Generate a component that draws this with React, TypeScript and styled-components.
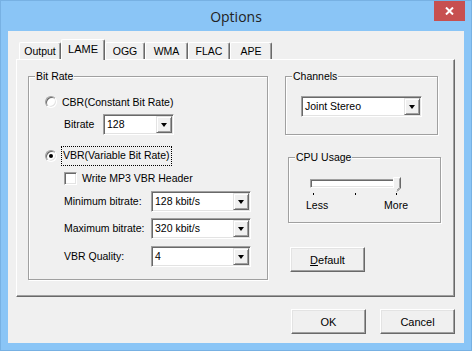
import React from "react";
import styled, { createGlobalStyle } from "styled-components";

const Global = createGlobalStyle`
  html, body { margin: 0; padding: 0; background: #8ac5f6; }
  body {
    font-family: "Liberation Sans", Arial, sans-serif;
    font-size: 10.5px;
    color: #000;
  }
`;

const Win = styled.div`
  width: 472px;
  height: 351px;
  box-sizing: border-box;
  background: #8ac5f6;
  border: 1px solid #77b1e3;
  display: flex;
  flex-direction: column;
`;

const TitleBar = styled.div`
  height: 30px;
  display: grid;
  grid-template-columns: 1fr auto 1fr;
  align-items: center;
`;

const Title = styled.div`
  grid-column: 2;
  font-family: "Open Sans", "Noto Sans", sans-serif;
  font-size: 14px;
  color: #222;
  padding-top: 1px;
`;

const CloseBtn = styled.div`
  grid-column: 3;
  justify-self: end;
  align-self: start;
  width: 31px;
  height: 20px;
  margin-right: 6px;
  background: #c75050;
  display: flex;
  align-items: center;
  justify-content: center;
`;

const Client = styled.div`
  flex: 1;
  margin: 0 7px 7px 7px;
  background: #f0f0f0;
  padding: 8px 9px 0 8px;
  display: flex;
  flex-direction: column;
`;

const TabStrip = styled.div`
  height: 20px;
  display: flex;
  align-items: flex-end;
  padding-left: 3px;
  position: relative;
  z-index: 1;
`;

const Tab = styled.div<{ $w: number; $active?: boolean }>`
  width: ${(p) => p.$w}px;
  height: ${(p) => (p.$active ? 21 : 17)}px;
  margin-bottom: ${(p) => (p.$active ? -1 : 0)}px;
  box-sizing: border-box;
  background: #f0f0f0;
  border-top: 1px solid #fff;
  border-left: 1px solid #fff;
  border-right: 1px solid #696969;
  box-shadow: inset -1px 0 0 #a0a0a0;
  border-radius: 2px 2px 0 0;
  display: flex;
  justify-content: center;
  padding-top: ${(p) => (p.$active ? 3 : 2)}px;
  font-size: ${(p) => (p.$active ? 11 : 10.5)}px;
  line-height: 12px;
`;

const Panel = styled.div`
  height: 238px;
  box-sizing: border-box;
  border-top: 1px solid #fff;
  border-left: 1px solid #fff;
  border-right: 1px solid #696969;
  border-bottom: 1px solid #696969;
  box-shadow: inset -1px -1px 0 #a0a0a0;
  display: flex;
  padding: 16px 0 0 11px;
`;

const Column = styled.div<{ $ml?: number }>`
  display: flex;
  flex-direction: column;
  align-items: flex-start;
  margin-left: ${(p) => p.$ml ?? 0}px;
`;

const Group = styled.div<{ $w: number; $h: number; $ml?: number; $mt?: number }>`
  position: relative;
  width: ${(p) => p.$w}px;
  height: ${(p) => p.$h}px;
  margin-left: ${(p) => p.$ml ?? 0}px;
  margin-top: ${(p) => p.$mt ?? 0}px;
  box-sizing: border-box;
  border: 1px solid #a0a0a0;
  box-shadow: 1px 1px 0 #fff, inset 1px 1px 0 #fff;
  display: flex;
  flex-direction: column;
`;

const Legend = styled.div`
  position: absolute;
  top: -7px;
  left: 6px;
  padding: 0 1px;
  background: #f0f0f0;
  line-height: 13px;
`;

const Row = styled.div<{ $mt?: number; $pl?: number; $h?: number; $gap?: number }>`
  display: flex;
  align-items: center;
  margin-top: ${(p) => p.$mt ?? 0}px;
  padding-left: ${(p) => p.$pl ?? 0}px;
  height: ${(p) => (p.$h ? `${p.$h}px` : "auto")};
  gap: ${(p) => p.$gap ?? 0}px;
`;

const Label = styled.span<{ $w?: number }>`
  display: inline-block;
  width: ${(p) => (p.$w ? `${p.$w}px` : "auto")};
  white-space: nowrap;
  line-height: 13px;
`;

const FocusLabel = styled.span`
  outline: 1px dotted #000;
  padding: 2px 1px 3px 1px;
  line-height: 13px;
  white-space: nowrap;
`;

const Radio = styled.span<{ $checked?: boolean }>`
  width: 12px;
  height: 12px;
  box-sizing: border-box;
  border-radius: 50%;
  border: 1px solid;
  border-color: #a0a0a0 #fff #fff #a0a0a0;
  box-shadow: inset 1px 1px 0 #696969, inset -1px -1px 0 #e3e3e3;
  background: #fff;
  display: flex;
  align-items: center;
  justify-content: center;
  &::after {
    content: "";
    width: 4px;
    height: 4px;
    border-radius: 50%;
    background: ${(p) => (p.$checked ? "#000" : "transparent")};
  }
`;

const Check = styled.span`
  width: 13px;
  height: 13px;
  box-sizing: border-box;
  border: 1px solid;
  border-color: #a0a0a0 #fff #fff #a0a0a0;
  box-shadow: inset 1px 1px 0 #696969, inset -1px -1px 0 #e3e3e3;
  background: #fff;
`;

const Combo = styled.div<{ $w: number; $ml?: number; $mt?: number }>`
  width: ${(p) => p.$w}px;
  height: 21px;
  margin-left: ${(p) => p.$ml ?? 0}px;
  margin-top: ${(p) => p.$mt ?? 0}px;
  box-sizing: border-box;
  border: 1px solid;
  border-color: #a0a0a0 #fff #fff #a0a0a0;
  box-shadow: inset 1px 1px 0 #696969, inset -1px -1px 0 #e3e3e3;
  background: #fff;
  display: flex;
  padding: 1px 1px 1px 1px;
`;

const ComboText = styled.div`
  flex: 1;
  padding-left: 2px;
  line-height: 17px;
  white-space: nowrap;
`;

const ComboArrow = styled.div`
  width: 16px;
  height: 17px;
  box-sizing: border-box;
  background: #f0f0f0;
  border: 1px solid;
  border-color: #e3e3e3 #696969 #696969 #e3e3e3;
  box-shadow: inset 1px 1px 0 #fff, inset -1px -1px 0 #a0a0a0;
  display: flex;
  align-items: center;
  justify-content: center;
  &::after {
    content: "";
    width: 0;
    height: 0;
    border-left: 3.5px solid transparent;
    border-right: 3.5px solid transparent;
    border-top: 4px solid #000;
  }
`;

const Button = styled.div<{ $ml?: number; $mt?: number }>`
  width: 75px;
  height: 25px;
  margin-left: ${(p) => p.$ml ?? 0}px;
  margin-top: ${(p) => p.$mt ?? 0}px;
  box-sizing: border-box;
  background: #f0f0f0;
  border: 1px solid;
  border-color: #fff #696969 #696969 #fff;
  box-shadow: inset -1px -1px 0 #a0a0a0, inset 1px 1px 0 #e3e3e3;
  display: flex;
  align-items: center;
  justify-content: center;
  font-size: 11px;
  u { text-decoration: underline; }
`;

const ButtonRow = styled.div`
  display: flex;
  justify-content: flex-end;
  gap: 14px;
  margin-top: 12px;
`;

const SliderBox = styled.div`
  width: 102px;
  margin: 21px 0 0 17px;
  display: flex;
  flex-direction: column;
`;

const TrackWrap = styled.div`
  position: relative;
  margin-left: 4px;
  width: 91px;
  height: 9px;
`;

const Track = styled.div`
  width: 100%;
  height: 100%;
  box-sizing: border-box;
  border: 1px solid;
  border-color: #a0a0a0 #fff #fff #a0a0a0;
  box-shadow: inset 1px 1px 0 #696969, inset -1px -1px 0 #e3e3e3;
  background: #fff;
`;

const Thumb = styled.svg`
  position: absolute;
  right: 0;
  top: -2px;
`;

const Ticks = styled.div`
  display: flex;
  justify-content: space-between;
  width: 84px;
  margin: 5px 0 0 7px;
`;

const TickMark = styled.span`
  width: 1px;
  height: 2px;
  background: #000;
`;

const SliderLabels = styled.div`
  display: flex;
  justify-content: space-between;
  margin-top: 4px;
  line-height: 13px;
`;

const ComboBox = ({ w, value, ml, mt }: { w: number; value: string; ml?: number; mt?: number }) => (
  <Combo $w={w} $ml={ml} $mt={mt}>
    <ComboText>{value}</ComboText>
    <ComboArrow />
  </Combo>
);

export default function App() {
  return (
    <>
      <Global />
      <Win>
        <TitleBar>
          <Title>Options</Title>
          <CloseBtn>
            <svg width="9" height="8" viewBox="0 0 9 8">
              <path d="M1 0.5 L8 7.5 M8 0.5 L1 7.5" stroke="#fff" strokeWidth="2" />
            </svg>
          </CloseBtn>
        </TitleBar>
        <Client>
          <TabStrip>
            <Tab $w={42}>Output</Tab>
            <Tab $w={44} $active>LAME</Tab>
            <Tab $w={40}>OGG</Tab>
            <Tab $w={43}>WMA</Tab>
            <Tab $w={42}>FLAC</Tab>
            <Tab $w={42}>APE</Tab>
          </TabStrip>
          <Panel>
            <Column>
              <Group $w={240} $h={204}>
                <Legend>Bit Rate</Legend>
                <Row $mt={17} $pl={16} $h={16} $gap={5}>
                  <Radio />
                  <Label>CBR(Constant Bit Rate)</Label>
                </Row>
                <Row $mt={4} $pl={35}>
                  <Label $w={39}>Bitrate</Label>
                  <ComboBox w={71} value="128" />
                </Row>
                <Row $mt={12} $pl={16} $h={18} $gap={5}>
                  <Radio $checked />
                  <FocusLabel>VBR(Variable Bit Rate)</FocusLabel>
                </Row>
                <Row $mt={7} $pl={35} $h={13} $gap={5}>
                  <Check />
                  <Label>Write MP3 VBR Header</Label>
                </Row>
                <Row $mt={6} $pl={35}>
                  <Label $w={87}>Minimum bitrate:</Label>
                  <ComboBox w={100} value="128 kbit/s" />
                </Row>
                <Row $mt={6} $pl={35}>
                  <Label $w={87}>Maximum bitrate:</Label>
                  <ComboBox w={100} value="320 kbit/s" />
                </Row>
                <Row $mt={7} $pl={35}>
                  <Label $w={87}>VBR Quality:</Label>
                  <ComboBox w={100} value="4" />
                </Row>
              </Group>
            </Column>
            <Column $ml={17}>
              <Group $w={153} $h={59}>
                <Legend>Channels</Legend>
                <ComboBox w={121} value="Joint Stereo" ml={15} mt={19} />
              </Group>
              <Group $w={153} $h={66} $ml={3} $mt={22}>
                <Legend>CPU Usage</Legend>
                <SliderBox>
                  <TrackWrap>
                    <Track />
                    <Thumb width="8" height="15" viewBox="0 0 8 15">
                      <path d="M0.5 0.5 H7.5 V11 L4 14.5 L0.5 11 Z" fill="#f0f0f0" />
                      <path d="M0.5 11 V0.5 H7" fill="none" stroke="#fff" />
                      <path d="M7.5 0.5 V11 L4 14.5" fill="none" stroke="#696969" />
                      <path d="M6.5 1.5 V10.5 L4 13" fill="none" stroke="#a0a0a0" />
                    </Thumb>
                  </TrackWrap>
                  <Ticks>
                    <TickMark />
                    <TickMark />
                    <TickMark />
                  </Ticks>
                  <SliderLabels>
                    <span>Less</span>
                    <span>More</span>
                  </SliderLabels>
                </SliderBox>
              </Group>
              <Button $ml={5} $mt={24}>
                <span><u>D</u>efault</span>
              </Button>
            </Column>
          </Panel>
          <ButtonRow>
            <Button>OK</Button>
            <Button>Cancel</Button>
          </ButtonRow>
        </Client>
      </Win>
    </>
  );
}
